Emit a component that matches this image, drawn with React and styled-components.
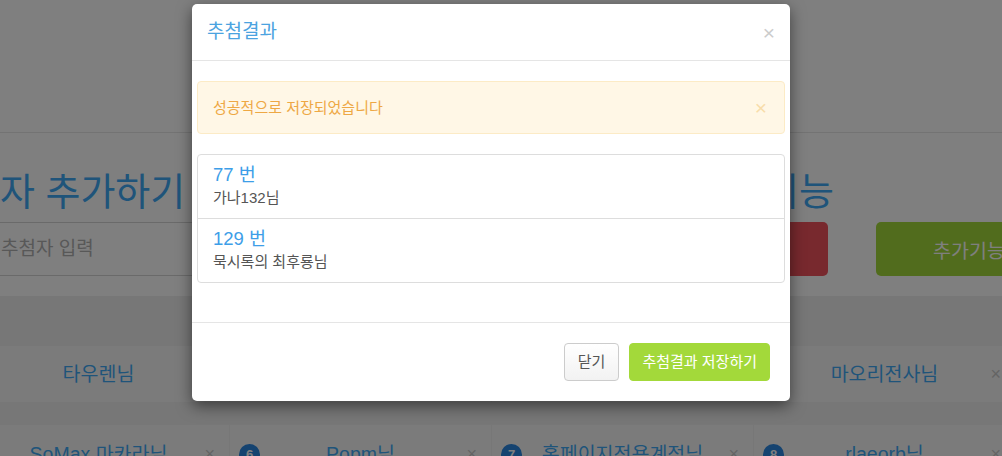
import React from "react";
import styled, { createGlobalStyle } from "styled-components";

const GlobalStyle = createGlobalStyle`
  *, *::before, *::after { box-sizing: border-box; }
  html, body { margin: 0; padding: 0; overflow: hidden; }
  body {
    font-family: "Liberation Sans", "Noto Sans CJK KR", sans-serif;
    font-size: 14px;
    color: #333;
    background: #fff;
  }
`;

const Screen = styled.div`
  position: relative;
  width: 100%;
  height: 456px;
  overflow: hidden;
`;

// 뒤쪽 페이지
const Page = styled.div`
  width: 100%;
  height: 456px;
  overflow: hidden;
  background: #fff;
`;

const TopBar = styled.div`
  height: 133px;
  border-bottom: 1px solid #e6e6e6;
`;

const Section = styled.div`
  height: 163px;
  padding-top: 39px;
`;

const HeadingRow = styled.div`
  display: flex;
  margin-left: -70px;
  height: 40px;
  margin-bottom: 10px;
`;

const BigHeading = styled.h2`
  margin: 0;
  width: ${(p) => p.$width || "auto"};
  flex-shrink: 0;
  font-size: 38px;
  line-height: 40px;
  font-weight: normal;
  color: #3fa9f5;
  white-space: nowrap;
`;

const ControlRow = styled.div`
  display: flex;
  margin-left: -12px;
  height: 54px;
`;

const NameInput = styled.input`
  width: 692px;
  flex-shrink: 0;
  height: 54px;
  border: 1px solid #d4d4d4;
  padding: 0 12px;
  font-family: inherit;
  font-size: 19px;
  background: #fff;
  &::placeholder { color: #b0b0b0; }
`;

const BigButton = styled.div`
  flex-shrink: 0;
  width: ${(p) => p.$width}px;
  margin-left: ${(p) => p.$gap}px;
  height: 54px;
  border-radius: 5px;
  background: ${(p) => p.$bg};
  color: #fff;
  font-size: 19.5px;
  display: flex;
  align-items: center;
  justify-content: center;
`;

const Band = styled.div`
  height: ${(p) => p.$h}px;
  background: #eee;
`;

const CellRow = styled.div`
  display: flex;
  gap: 1px;
  margin-left: -32px;
  background: #eee;
  height: ${(p) => p.$h}px;
`;

const Cell = styled.div`
  width: 261px;
  flex-shrink: 0;
  background: #f7f7f7;
  display: grid;
  grid-template-columns: 40px 1fr 40px;
  align-items: center;
  align-content: ${(p) => (p.$top ? "start" : "center")};
  padding-top: ${(p) => (p.$top ? "18px" : "0")};
`;

const CellName = styled.span`
  grid-column: 2;
  text-align: center;
  font-size: 19.5px;
  line-height: 22px;
  color: #3fa9f5;
  white-space: nowrap;
`;

const CellClose = styled.span`
  grid-column: 3;
  justify-self: end;
  margin-right: 14px;
  color: #c8c8c8;
  font-size: 18px;
  line-height: 1;
`;

const Badge = styled.span`
  grid-column: 1;
  justify-self: start;
  margin-left: 9px;
  width: 21px;
  height: 21px;
  border-radius: 50%;
  background: #2a86e0;
  color: #fff;
  font-size: 13px;
  font-weight: bold;
  display: flex;
  align-items: center;
  justify-content: center;
`;

// 모달 배경 (bootstrap modal-backdrop 처럼)
const Backdrop = styled.div`
  position: absolute;
  top: 0;
  left: 0;
  width: 100%;
  height: 456px;
  z-index: 90;
  background: #000;
  opacity: 0.5;
`;

const ModalWrap = styled.div`
  position: absolute;
  top: 0;
  left: 0;
  width: 100%;
  z-index: 100;
  display: flex;
  justify-content: center;
  padding: 4px 20px 0 0;
`;

const Modal = styled.div`
  width: 598px;
  background: #fff;
  border-radius: 5px;
  box-shadow: 0 5px 15px rgba(0, 0, 0, 0.5);
`;

const ModalHeader = styled.div`
  display: flex;
  align-items: center;
  justify-content: space-between;
  padding: 15px;
  border-bottom: 1px solid #e5e5e5;
`;

const ModalTitle = styled.h4`
  margin: 0;
  font-size: 19px;
  line-height: 26px;
  font-weight: normal;
  color: #4ba3e0;
`;

const CloseX = styled.span`
  font-size: 21px;
  line-height: 1;
  color: ${(p) => p.$color || "#cccccc"};
`;

const ModalBody = styled.div`
  padding: 20px 5px 20px;
`;

const Alert = styled.div`
  display: flex;
  align-items: center;
  justify-content: space-between;
  padding: 15px 17px 15px 15px;
  margin-bottom: 20px;
  background: #fff7e6;
  border: 1px solid #fcebc6;
  border-radius: 4px;
  color: #eea844;
  font-size: 15px;
  line-height: 20px;
`;

const ListGroup = styled.div`
  border: 1px solid #ddd;
  border-radius: 4px;
  margin-bottom: 19px;
`;

const ListItem = styled.div`
  padding: 10px 15px;
  & + & { border-top: 1px solid #ddd; }
`;

const ItemHeading = styled.div`
  font-size: 18.5px;
  line-height: 19px;
  color: #3d9ee8;
  margin-bottom: 4px;
`;

const ItemText = styled.div`
  font-size: 15px;
  line-height: 20px;
  color: #555;
`;

const ModalFooter = styled.div`
  display: flex;
  justify-content: flex-end;
  gap: 10px;
  padding: 20px;
  border-top: 1px solid #e5e5e5;
`;

const Button = styled.button`
  height: 38px;
  padding: 0 ${(p) => (p.$primary ? 12 : 13)}px;
  border-radius: 4px;
  font-family: inherit;
  font-size: 15px;
  line-height: 20px;
  border: 1px solid ${(p) => (p.$primary ? "#a3d93a" : "#ccc")};
  background: ${(p) => (p.$primary ? "#a3d93a" : "linear-gradient(#fff, #f2f2f2)")};
  color: ${(p) => (p.$primary ? "#fff" : "#555")};
`;

const tabs = ["타우렌님", "빛나는별님", "초코우유님", "마오리전사님"];
const cards = [
  { n: 5, name: "SoMax 마카라님" },
  { n: 6, name: "Popm님" },
  { n: 7, name: "홈페이지전용계정님" },
  { n: 8, name: "rlaeorb님" },
];
const winners = [
  { no: 77, name: "가나132님" },
  { no: 129, name: "묵시록의 최후룡님" },
];

export default function App() {
  return (
    <Screen>
      <GlobalStyle />
      <Page>
        <TopBar />
        <Section>
          <HeadingRow>
            <BigHeading $width="764px">추첨자 추가하기</BigHeading>
            <BigHeading>부가기능</BigHeading>
          </HeadingRow>
          <ControlRow>
            <NameInput placeholder="추첨자 입력" readOnly />
            <BigButton $width={128} $gap={20} $bg="#f1525d">추첨</BigButton>
            <BigButton $width={186} $gap={48} $bg="#a3d93a">추가기능</BigButton>
          </ControlRow>
        </Section>
        <Band $h={50} />
        <CellRow $h={56}>
          {tabs.map((t) => (
            <Cell key={t}>
              <CellName>{t}</CellName>
              <CellClose>×</CellClose>
            </Cell>
          ))}
        </CellRow>
        <Band $h={23} />
        <CellRow $h={60}>
          {cards.map((c) => (
            <Cell key={c.n} $top>
              <Badge>{c.n}</Badge>
              <CellName>{c.name}</CellName>
              <CellClose>×</CellClose>
            </Cell>
          ))}
        </CellRow>
      </Page>

      <Backdrop />
      <ModalWrap>
        <Modal>
          <ModalHeader>
            <ModalTitle>추첨결과</ModalTitle>
            <CloseX>×</CloseX>
          </ModalHeader>
          <ModalBody>
            <Alert>
              <span>성공적으로 저장되었습니다</span>
              <CloseX $color="#f8ddaa">×</CloseX>
            </Alert>
            <ListGroup>
              {winners.map((w) => (
                <ListItem key={w.no}>
                  <ItemHeading>{w.no} 번</ItemHeading>
                  <ItemText>{w.name}</ItemText>
                </ListItem>
              ))}
            </ListGroup>
          </ModalBody>
          <ModalFooter>
            <Button>닫기</Button>
            <Button $primary>추첨결과 저장하기</Button>
          </ModalFooter>
        </Modal>
      </ModalWrap>
    </Screen>
  );
}
